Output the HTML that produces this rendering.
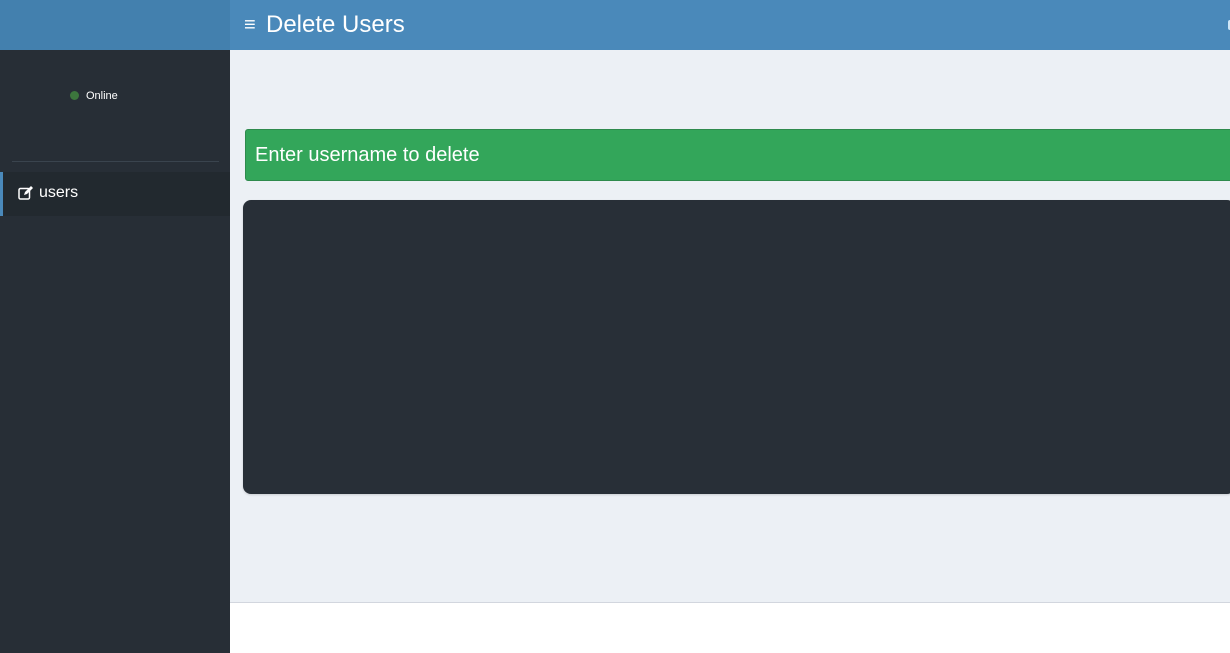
<!DOCTYPE html>
<html><head><meta charset="utf-8"><style>
*{margin:0;padding:0;box-sizing:border-box}
body{width:1230px;height:653px;overflow:hidden;background:#ecf0f5;font-family:"Liberation Sans",sans-serif;position:relative}
.logo{position:absolute;left:0;top:0;width:230px;height:50px;background:#4380ae}
.top{position:absolute;left:230px;top:0;right:0;height:50px;background:#4a89ba;color:#fff}
.top .t{position:absolute;left:36px;top:11px;font-size:24px}
.top .h{position:absolute;left:14px;top:14px;font-size:20px}
.top .r{position:absolute;right:0;top:20px;width:2px;height:10px;background:#cfe6f7;border-radius:2px 0 0 2px}
.side{position:absolute;left:0;top:50px;width:230px;bottom:0;background:#272e36}
.dot{position:absolute;left:70px;top:91px;width:9px;height:9px;border-radius:50%;background:#3c763d}
.on{position:absolute;left:86px;top:90px;font-size:11px;color:#fff;line-height:13px}
.hr{position:absolute;left:12px;top:161px;width:207px;height:1px;background:#3a444e}
.item{position:absolute;left:0;top:172px;width:230px;height:44px;background:#22292f;border-left:3px solid #4a89ba}
.item span{position:absolute;left:36px;top:12px;color:#fff;font-size:16px;line-height:18px}
.item svg{position:absolute;left:15px;top:14px}
.green{position:absolute;left:245px;top:129px;right:-5px;height:52px;background:#33a65a;border:1px solid #2e8a4d;border-radius:3px;color:#fff;font-size:20px;padding:14px 9px}
.box{position:absolute;left:243px;top:200px;right:-5px;height:294px;background:#282f37;border-radius:8px;box-shadow:0 1px 2px rgba(0,0,0,.15)}
.foot{position:absolute;left:230px;top:602px;right:0;bottom:0;background:#fff;border-top:1px solid #d2d6de}
</style></head><body>
<div class="logo"></div>
<div class="top"><span class="h">≡</span><span class="t">Delete Users</span><div class="r"></div></div>
<div class="side"></div>
<div class="dot"></div><div class="on">Online</div>
<div class="hr"></div>
<div class="item"><svg width="16" height="14" viewBox="0 0 16 14"><rect x="1" y="2.5" width="10.5" height="10.5" rx="1.5" fill="none" stroke="#fff" stroke-width="1.5"/><path d="M6 9l1-3 6-6 2 2-6 6z" fill="#fff"/></svg><span>users</span></div>
<div class="green">Enter username to delete</div>
<div class="box"></div>
<div class="foot"></div>
</body></html>
